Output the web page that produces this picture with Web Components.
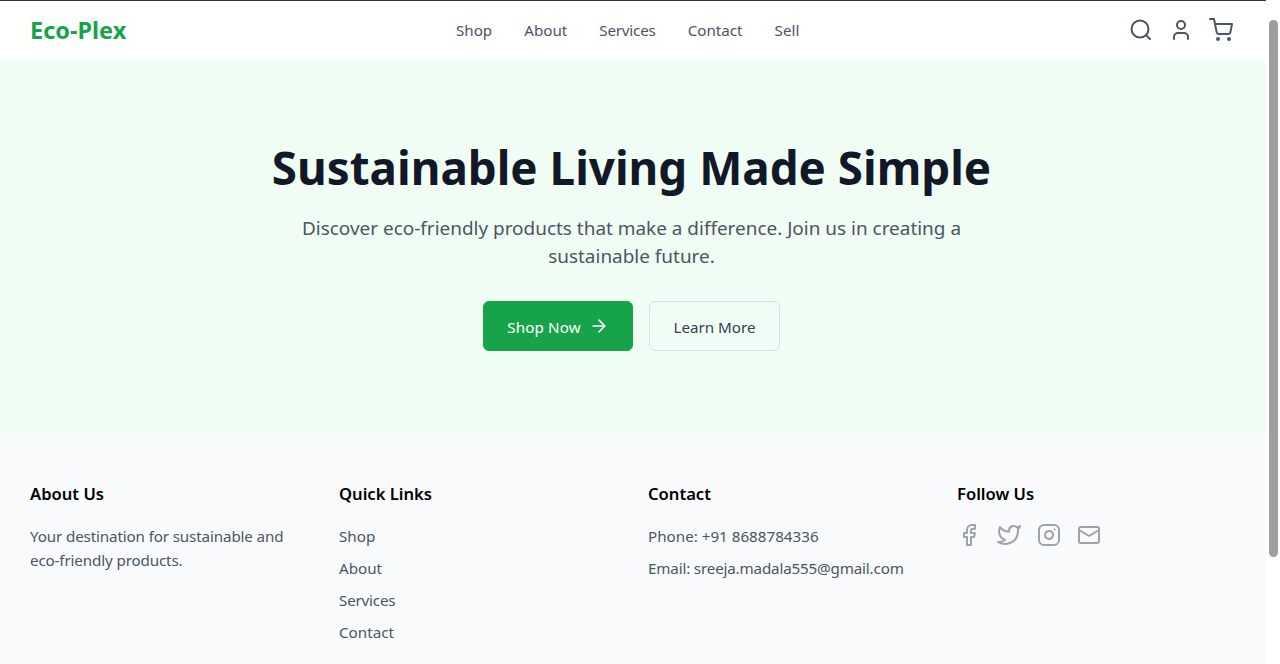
<!DOCTYPE html>
<html lang="en">
<head>
<meta charset="utf-8">
<title>Eco-Plex</title>
<style>
    html, body { margin: 0; height: 100%; overflow: hidden; background: white; }
    body {
        font-family: "Noto Sans", "Open Sans", sans-serif;
        display: flex;
        color: #111827;
    }
</style>
</head>
<body>
<eco-page></eco-page>
<fake-scrollbar></fake-scrollbar>

<script>
const svgAttrs = 'fill="none" stroke="currentColor" stroke-width="2" stroke-linecap="round" stroke-linejoin="round" viewBox="0 0 24 24"';

class EcoHeader extends HTMLElement {
    connectedCallback() {
        this.attachShadow({ mode: 'open' });
        this.shadowRoot.innerHTML = `
            <style>
                :host {
                    display: block;
                    background: white;
                    border-top: 1px solid #333;
                }
                .bar {
                    height: 60px;
                    box-sizing: border-box;
                    padding: 0 33px 2px 30px;
                    display: flex;
                    justify-content: space-between;
                    align-items: center;
                }
                .logo {
                    color: #16a34a;
                    font-size: 23.5px;
                    font-weight: 700;
                }
                nav {
                    display: flex;
                    gap: 32px;
                }
                nav a {
                    color: #4b5563;
                    font-size: 15.2px;
                    text-decoration: none;
                }
                .icons {
                    display: flex;
                    gap: 16px;
                    color: #4b5563;
                }
                .icons svg { display: block; width: 24px; height: 24px; }
            </style>
            <div class="bar">
                <div class="logo">Eco-Plex</div>
                <nav>
                    <a href="#">Shop</a>
                    <a href="#">About</a>
                    <a href="#" style="letter-spacing:-0.2px">Services</a>
                    <a href="#">Contact</a>
                    <a href="#">Sell</a>
                </nav>
                <div class="icons">
                    <svg ${svgAttrs}><circle cx="11" cy="11" r="8.5"/><path d="M21 21l-3.8-3.8"/></svg>
                    <svg ${svgAttrs}><path d="M19 21v-2a4 4 0 0 0-4-4H9a4 4 0 0 0-4 4v2"/><circle cx="12" cy="7" r="4"/></svg>
                    <svg ${svgAttrs}><circle cx="9" cy="21" r="1"/><circle cx="20" cy="21" r="1"/><path d="M1 1h4l2.7 13.4a2 2 0 0 0 2 1.6h9.7a2 2 0 0 0 2-1.6L23 6H6"/></svg>
                </div>
            </div>
        `;
    }
}

class EcoHero extends HTMLElement {
    connectedCallback() {
        this.attachShadow({ mode: 'open' });
        this.shadowRoot.innerHTML = `
            <style>
                :host {
                    display: flex;
                    flex-direction: column;
                    align-items: center;
                    height: 371px;
                    box-sizing: border-box;
                    padding: 78px 3px 0 0;
                    background: #f0fdf4;
                }
                h1 {
                    margin: 0;
                    font-size: 45.75px;
                    line-height: 56px;
                    font-weight: 700;
                    color: #111827;
                }
                p {
                    margin: 19px 0 0;
                    width: 672px;
                    text-align: center;
                    font-size: 18.95px;
                    line-height: 28px;
                    color: #4b5563;
                }
                .actions {
                    display: flex;
                    gap: 16px;
                    margin-top: 31px;
                }
            </style>
            <h1><slot name="title"></slot></h1>
            <p><slot name="text"></slot></p>
            <div class="actions"><slot></slot></div>
        `;
    }
}

class EcoButton extends HTMLElement {
    connectedCallback() {
        this.attachShadow({ mode: 'open' });
        this.shadowRoot.innerHTML = `
            <style>
                :host {
                    display: inline-flex;
                    align-items: center;
                    justify-content: center;
                    gap: 8px;
                    box-sizing: border-box;
                    height: 50px;
                    border-radius: 6px;
                    font-size: 15.2px;
                    color: #374151;
                    border: 1px solid #d9e2e0;
                }
                :host([primary]) {
                    background: #16a34a;
                    border-color: #16a34a;
                    color: white;
                    letter-spacing: 0.1px;
                }
                .label { display: block; margin-top: 1px; }
                svg { width: 20px; height: 20px; display: block; }
            </style>
            <span class="label"><slot></slot></span>
            ${this.hasAttribute('primary') ? `<svg ${svgAttrs}><path d="M5 12h14M12 5l7 7-7 7"/></svg>` : ''}
        `;
    }
}

class FooterColumn extends HTMLElement {
    connectedCallback() {
        this.attachShadow({ mode: 'open' });
        this.shadowRoot.innerHTML = `
            <style>
                :host {
                    display: block;
                    font-size: 15.2px;
                    line-height: 24px;
                    color: #4b5563;
                }
                h3 {
                    margin: 0 0 16px;
                    font-size: 16.6px;
                    line-height: 28px;
                    font-weight: 600;
                    color: #000;
                }
                .list {
                    display: flex;
                    flex-direction: column;
                    gap: 8px;
                }
            </style>
            <h3>${this.getAttribute('heading')}</h3>
            <div class="list"><slot></slot></div>
        `;
    }
}

class EcoFooter extends HTMLElement {
    connectedCallback() {
        this.attachShadow({ mode: 'open' });
        this.shadowRoot.innerHTML = `
            <style>
                :host {
                    display: block;
                    flex: 1;
                    background: #f9fafb;
                }
                .grid {
                    display: grid;
                    grid-template-columns: repeat(4, 277px);
                    column-gap: 32px;
                    padding: 48px 30px 0;
                }
            </style>
            <div class="grid"><slot></slot></div>
        `;
    }
}

class SocialIcons extends HTMLElement {
    connectedCallback() {
        this.attachShadow({ mode: 'open' });
        this.shadowRoot.innerHTML = `
            <style>
                :host {
                    display: flex;
                    gap: 16px;
                    color: #9ca3af;
                    margin-top: -1px;
                }
                svg { width: 24px; height: 24px; display: block; }
            </style>
            <svg ${svgAttrs}><path d="M18 2h-3a5 5 0 0 0-5 5v3H7v4h3v8h4v-8h3l1-4h-4V7a1 1 0 0 1 1-1h3z"/></svg>
            <svg ${svgAttrs}><path d="M23 3a10.9 10.9 0 0 1-3 1.5 4.48 4.48 0 0 0-7.86 3v1A10.66 10.66 0 0 1 3 4s-4 9 5 13a11.64 11.64 0 0 1-7 2c9 5 20 0 20-11.5a4.5 4.5 0 0 0-.08-.83A7.72 7.72 0 0 0 23 3z"/></svg>
            <svg ${svgAttrs}><rect x="2" y="2" width="20" height="20" rx="5" ry="5"/><path d="M16 11.4A4 4 0 1 1 12.6 8 4 4 0 0 1 16 11.4z"/><path d="M17.5 6.5h.01"/></svg>
            <svg ${svgAttrs}><rect x="2" y="4" width="20" height="16" rx="2"/><path d="M22 7l-10 6L2 7"/></svg>
        `;
    }
}

class FakeScrollbar extends HTMLElement {
    connectedCallback() {
        this.attachShadow({ mode: 'open' });
        this.shadowRoot.innerHTML = `
            <style>
                :host {
                    display: block;
                    flex: 0 0 14px;
                    box-sizing: border-box;
                    padding: 20px 2px 0 3px;
                    background: white;
                }
                .thumb {
                    height: 537px;
                    background: #9e9e9e;
                    border-radius: 5px;
                }
            </style>
            <div class="thumb"></div>
        `;
    }
}

class EcoPage extends HTMLElement {
    connectedCallback() {
        this.attachShadow({ mode: 'open' });
        this.shadowRoot.innerHTML = `
            <style>
                :host {
                    display: flex;
                    flex-direction: column;
                    flex: 1;
                    min-width: 0;
                }
            </style>
            <eco-header></eco-header>
            <eco-hero>
                <span slot="title">Sustainable Living Made Simple</span>
                <span slot="text">Discover eco-friendly products that make a difference. Join us in creating a sustainable future.</span>
                <eco-button primary style="width:150px">Shop Now</eco-button>
                <eco-button style="width:131px">Learn More</eco-button>
            </eco-hero>
            <eco-footer>
                <footer-column heading="About Us">
                    <div style="letter-spacing:-0.14px">Your destination for sustainable and eco-friendly products.</div>
                </footer-column>
                <footer-column heading="Quick Links">
                    <div>Shop</div>
                    <div>About</div>
                    <div style="letter-spacing:-0.2px">Services</div>
                    <div>Contact</div>
                </footer-column>
                <footer-column heading="Contact">
                    <div>Phone: +91 8688784336</div>
                    <div style="letter-spacing:-0.17px">Email: sreeja.madala555@gmail.com</div>
                </footer-column>
                <footer-column heading="Follow Us">
                    <social-icons></social-icons>
                </footer-column>
            </eco-footer>
        `;
    }
}

customElements.define('eco-header', EcoHeader);
customElements.define('eco-hero', EcoHero);
customElements.define('eco-button', EcoButton);
customElements.define('footer-column', FooterColumn);
customElements.define('eco-footer', EcoFooter);
customElements.define('social-icons', SocialIcons);
customElements.define('fake-scrollbar', FakeScrollbar);
customElements.define('eco-page', EcoPage);
</script>
</body>
</html>
